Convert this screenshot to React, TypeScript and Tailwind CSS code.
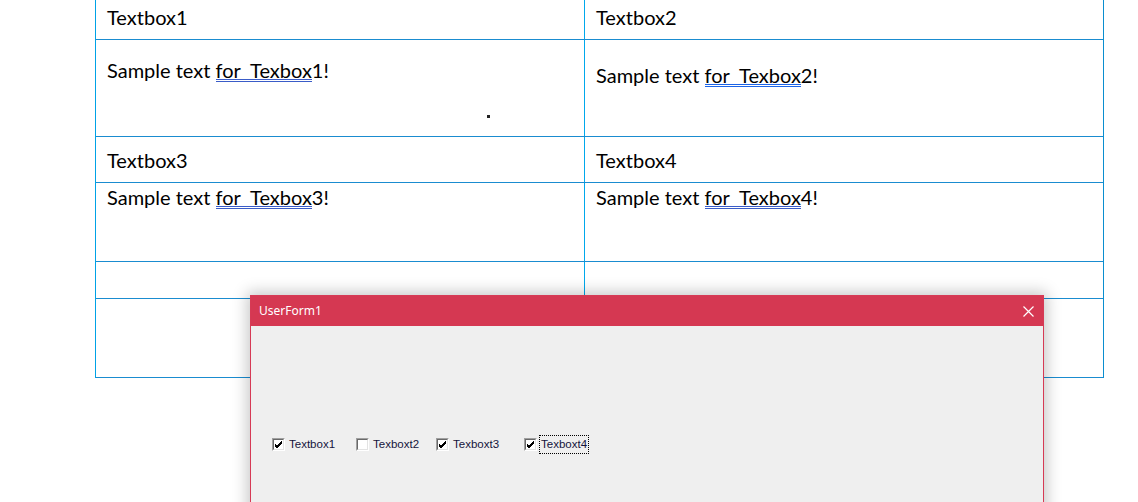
import React from "react";

const H = "border-b border-[#1a8cd0]";

function Check({ checked }: { checked: boolean }) {
  return (
    <div className="w-[13px] h-[13px] border border-t-[#a0a0a0] border-l-[#a0a0a0] border-b-white border-r-white shrink-0">
      <div className="w-full h-full border border-t-[#696969] border-l-[#696969] border-b-[#e3e3e3] border-r-[#e3e3e3] bg-white flex items-center justify-center">
        {checked && (
          <svg width="9" height="9" viewBox="0 0 9 9">
            <path d="M1 4 L3 6 L8 1 M1 5 L3 7 L8 2 M1 6 L3 8 L8 3" stroke="#000" strokeWidth="1" fill="none" shapeRendering="crispEdges" />
          </svg>
        )}
      </div>
    </div>
  );
}

function Item({ checked, label, w, focus }: { checked: boolean; label: string; w: string; focus?: boolean }) {
  return (
    <div className={`flex items-center ${w}`}>
      <Check checked={checked} />
      <span
        className={`ml-[2px] text-[11.5px] leading-[13px] text-[#14143c] px-[1px] py-[2px] ${focus ? "border border-dotted border-black" : "border border-transparent"}`}
        style={{ fontFamily: '"Liberation Sans", Arial, sans-serif' }}
      >
        {label}
      </span>
    </div>
  );
}

function Ul({ children, color }: { children: React.ReactNode; color: string }) {
  return (
    <span className={`border-b-[3px] border-double ${color} pb-0`} style={{ lineHeight: "18px", display: "inline-block" }}>
      {children}
    </span>
  );
}

export default function App() {
  return (
    <div className="relative w-[1138px] h-[502px] overflow-hidden bg-white" style={{ fontFamily: "Lato, sans-serif" }}>
      <div className="ml-[95px] w-[1009px] border-l border-r border-l-[#00a2e6] border-r-[#0a8ed0] text-[20px] leading-[24px] text-black">
        <div className={`flex h-[40px] ${H}`}>
          <div className="w-[489px] border-r border-[#00a8ec] pl-[11px] pt-[5px]">Textbox1</div>
          <div className="flex-1 pl-[11px] pt-[5px]">Textbox2</div>
        </div>
        <div className={`flex h-[97px] ${H}`}>
          <div className="relative w-[489px] border-r border-[#00a8ec] pl-[11px] pt-[18px]">
            Sample text <Ul color="border-[#3a5cc8]">for&nbsp;&nbsp;Texbox</Ul>1!
            <div className="absolute left-[391px] top-[75px] w-[3px] h-[3px] bg-[#222]" />
          </div>
          <div className="flex-1 pl-[11px] pt-[23px]">
            Sample text <Ul color="border-[#1b64e8]">for&nbsp;&nbsp;Texbox</Ul>2!
          </div>
        </div>
        <div className={`flex h-[46px] ${H}`}>
          <div className="w-[489px] border-r border-[#00a8ec] pl-[11px] pt-[11px]">Textbox3</div>
          <div className="flex-1 pl-[11px] pt-[11px]">Textbox4</div>
        </div>
        <div className={`flex h-[79px] ${H}`}>
          <div className="w-[489px] border-r border-[#00a8ec] pl-[11px] pt-[2px]">
            Sample text <Ul color="border-[#3a5cc8]">for&nbsp;&nbsp;Texbox</Ul>3!
          </div>
          <div className="flex-1 pl-[11px] pt-[2px]">
            Sample text <Ul color="border-[#3a5cc8]">for&nbsp;&nbsp;Texbox</Ul>4!
          </div>
        </div>
        <div className={`flex h-[37px] ${H}`}>
          <div className="w-[489px] border-r border-[#00a8ec]" />
          <div className="flex-1" />
        </div>
        <div className={`flex h-[79px] ${H}`}>
          <div className="w-[489px] border-r border-[#00a8ec]" />
          <div className="flex-1" />
        </div>
      </div>

      <div className="absolute left-[250px] top-[295px] w-[794px] h-[230px] border border-[#d63a55] bg-[#efefef] shadow-[0_0_14px_3px_rgba(0,0,0,0.22)] flex flex-col">
        <div className="h-[30px] bg-[#d53852] flex items-center justify-between pl-[8px] pr-[9px] shrink-0">
          <span className="text-white text-[12px]" style={{ fontFamily: '"Noto Sans", "Open Sans", sans-serif' }}>UserForm1</span>
          <svg width="11" height="11" viewBox="0 0 11 11">
            <path d="M0.5 0.5 L10.5 10.5 M10.5 0.5 L0.5 10.5" stroke="#fff" strokeWidth="1.2" />
          </svg>
        </div>
        <div className="flex pl-[21px] pt-[109px]">
          <Item checked label="Textbox1" w="w-[84px]" />
          <Item checked={false} label="Texboxt2" w="w-[80px]" />
          <Item checked label="Texboxt3" w="w-[88px]" />
          <Item checked label="Texboxt4" w="w-[90px]" focus />
        </div>
      </div>
    </div>
  );
}
